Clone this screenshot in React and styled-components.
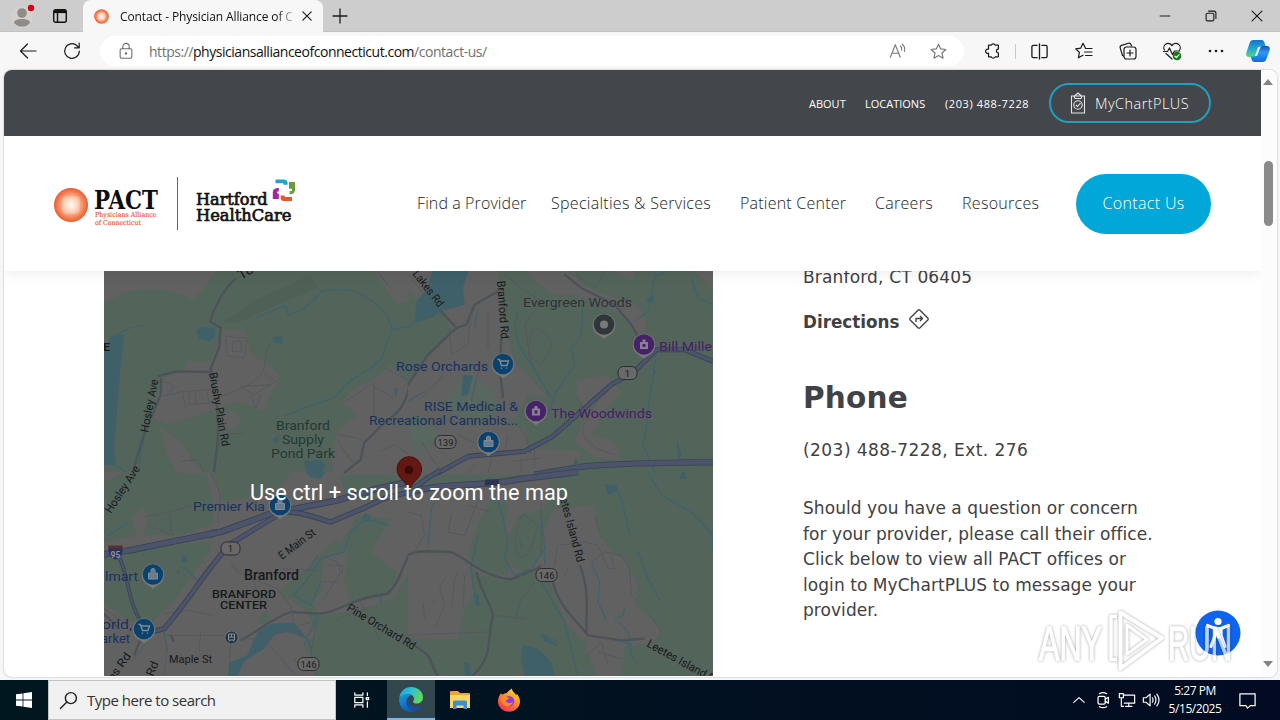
import React from 'react'
import styled, { createGlobalStyle } from 'styled-components'

const GlobalStyle = createGlobalStyle`
    *{
        box-sizing: border-box;
    }
    body{
        margin: 0;
        overflow: hidden;
        background: #f7f7f7;
    }
    svg{
        display: block;
        flex: none;
    }
`

// ---------- browser icons ----------

function Line({ size = 20, w = 1.2, color = '#1b1b1b', children }) {
    return (
        <svg width={size} height={size} viewBox="0 0 20 20" fill="none" stroke={color} strokeWidth={w} strokeLinecap="round" strokeLinejoin="round">
            {children}
        </svg>
    )
}

const STAR = 'M10 2.3l2.3 5 5.4.6-4 3.7 1.1 5.4-4.8-2.7L5.200 17l1.100-5.400-4-3.700 5.400-.6z'

function Sun({ size }) {
    return (
        <svg width={size} height={size} viewBox="0 0 36 36">
            <defs>
                <radialGradient id={'sun' + size}>
                    <stop offset="0" stopColor="#fffaf2" />
                    <stop offset=".35" stopColor="#fcd0b4" />
                    <stop offset=".72" stopColor="#f58a5e" />
                    <stop offset="1" stopColor="#ee5a30" />
                </radialGradient>
            </defs>
            <circle cx="18" cy="18" r="17.500" fill={'url(#sun' + size + ')'} />
            <rect x="9" y="9" width="18" height="18" rx="3" fill="#fff" opacity=".22" />
        </svg>
    )
}

function Copilot() {
    return (
        <svg width="26" height="26" viewBox="0 0 26 26">
            <defs>
                <linearGradient id="cpA" x1="0" y1="0" x2="0" y2="1">
                    <stop offset="0" stopColor="#1473d0" />
                    <stop offset=".5" stopColor="#20a8d0" />
                    <stop offset="1" stopColor="#58d38c" />
                </linearGradient>
                <linearGradient id="cpB" x1="0" y1="0" x2="0" y2="1">
                    <stop offset="0" stopColor="#1c4fbd" />
                    <stop offset=".4" stopColor="#2b9af3" />
                    <stop offset="1" stopColor="#1668dc" />
                </linearGradient>
            </defs>
            <path d="M8.500 2h8c2 0 2.600 1.500 3.200 3.500l.8 2.500h-3c-2 0-2.800 1-3.400 3l-1.600 5.500c-.5 1.500-1.500 2.500-3 2.500H4c-2.500 0-3.300-2-2.600-4.500L4.600 5C5.200 3 6.300 2 8.500 2z" fill="url(#cpA)" />
            <path d="M17.500 24h-8c-2 0-2.600-1.500-3.200-3.500L5.800 18.500h3.400c2 0 2.800-1 3.400-3l1.600-5c.5-1.500 1.500-2.500 3-2.500H22c2.500 0 3.300 2 2.600 4.500L21.400 21c-.6 2-1.700 3-3.900 3z" fill="url(#cpB)" />
            <path d="M15.800 8.600l-3.600 8.800-2.400.8 3.400-9.200z" fill="#fff" opacity=".9" />
        </svg>
    )
}

// ---------- tab strip ----------

function TabStrip() {
    return (
        <Strip>
            <Profile>
                <svg width="24" height="26" viewBox="0 0 24 26">
                    <circle cx="11" cy="14" r="11" fill="#d3d0ce" />
                    <circle cx="11" cy="10" r="4.800" fill="#8f8b89" />
                    <path d="M3 20c0-3 3.500-4 8-4s8 1 8 4c-2 2.500-5 3.600-8 3.600S5 22.500 3 20z" fill="#8f8b89" />
                    <circle cx="20" cy="5" r="3.200" fill="#d80010" />
                </svg>
            </Profile>
            <svg width="16" height="16" viewBox="0 0 16 16" fill="none" stroke="#111" strokeWidth="1.400">
                <rect x="1.700" y="1.700" width="12.600" height="12.600" rx="2" />
                <path d="M2 3.600h12" strokeWidth="3" />
                <path d="M5.500 4v10" />
            </svg>
            <Tab>
                <Sun size={15} />
                <TabTitle>Contact - Physician Alliance of C</TabTitle>
                <Line size={14} w={1.7}><path d="M4 4l12 12M16 4L4 16" /></Line>
            </Tab>
            <Line size={20} w={1.3}><path d="M10 3v14M3 10h14" /></Line>
            <WindowButtons>
                <Line size={14} w={1.4}><path d="M3 10h14" /></Line>
                <Line size={14} w={1.6}><rect x="3" y="6" width="11" height="11" rx="2" /><path d="M6.500 3H14a3 3 0 0 1 3 3v7.500" /></Line>
                <Line size={14} w={1.6}><path d="M3 3l14 14M17 3L3 17" /></Line>
            </WindowButtons>
        </Strip>
    )
}

function Toolbar() {
    return (
        <Tools>
            <Slot $w={48}><Line><path d="M18 10H2.500M9.500 3L2.500 10l7 7" /></Line></Slot>
            <Slot $w={40}><Line><path d="M17.300 10a7.300 7.300 0 1 1-2.300-5.300l2 1.900M17.200 2.200v4.600h-4.600" /></Line></Slot>
            <Address>
                <Line size={18} color="#6c6c6c"><rect x="3.500" y="7.500" width="13" height="10.500" rx="1.500" /><path d="M6.500 7.500V5a3.500 3.500 0 0 1 7 0v2.500" /><circle cx="10" cy="12.700" r=".7" fill="#555" /></Line>
                <Url>https://<b>physiciansallianceofconnecticut.com</b>/contact-us/</Url>
                <Slot $w={40}><Line size={18} color="#757575"><path d="M1.500 17L7 3l5.500 14M3.400 12.500h7.200M12.500 4.500c1.500 1 2 2.500 1.600 4.500M14.500 2.500c2.700 1.700 3.500 4.500 2.700 8" /></Line></Slot>
                <Slot $w={40}><Line size={19} color="#757575"><path d={STAR} /></Line></Slot>
            </Address>
            <Slot $w={44}>
                <Line size={18} w={1.4}><path d="M5 3.500h3.200a2.200 2.200 0 0 1 4.200 0H16v4.300a2 2 0 0 0 0 4.400v4.300h-3.600a2.200 2.200 0 0 1-4.200 0H5v-4a2.400 2.400 0 1 1 0-4.500z" /></Line>
            </Slot>
            <Divider />
            <Slot $w={46}><Line size={19} w={1.4}><path d="M10 2v16M7.500 3.500H3.500a1.500 1.500 0 0 0-1.500 1.500v10a1.500 1.500 0 0 0 1.500 1.500h4M12.500 3.500h4A1.500 1.500 0 0 1 18 5v10a1.500 1.500 0 0 1-1.500 1.500h-4" /></Line></Slot>
            <Slot $w={44}><Line><path d="M11.500 7.300L9 2.300 6.700 7.200l-5 .6 3.700 3.600-1 5.400L9 14.200M11.500 7.500H18M10.500 11H18M11.500 14.500H18" /></Line></Slot>
            <Slot $w={44}><Line><path d="M5.500 15L4.500 14.500 2.200 6.800A2 2 0 0 1 3.600 4.400L10.500 2.300A2 2 0 0 1 13 3.600L13.500 5" /><rect x="6" y="6" width="12" height="12" rx="2.500" /><path d="M12 9v6M9 12h6" /></Line></Slot>
            <Slot $w={44}>
                <Line>
                    <path d="M2.400 9A4.300 4.300 0 0 1 10 4.600 4.300 4.300 0 0 1 17.700 9M1.500 10.500H5.500L7.500 7l3 6.500 2-3.500h5M4 12.500l6 5.500" />
                    <circle cx="15" cy="15" r="4.300" fill="#107c10" stroke="none" />
                    <path d="M13 15.200l1.400 1.300L17 13.800" stroke="#fff" />
                </Line>
            </Slot>
            <Slot $w={44}><Line color="none"><g fill="#1b1b1b"><circle cx="4" cy="10" r="1.300" /><circle cx="10" cy="10" r="1.300" /><circle cx="16" cy="10" r="1.300" /></g></Line></Slot>
            <Slot $w={40}><Copilot /></Slot>
        </Tools>
    )
}

// ---------- site header ----------

function Logos() {
    return (
        <svg width="246" height="60" viewBox="50 174 246 60">
            <svg x="53.500" y="187.500" width="35" height="35"><Sun size={35} /></svg>
            <g fontFamily="'DejaVu Serif', serif">
                <text x="94" y="209" fontSize="25.500" fontWeight="700" fill="#0d0d0d" textLength="64" lengthAdjust="spacingAndGlyphs">PACT</text>
                <g fontSize="6.800" fill="#e8562a" stroke="#e8562a" strokeWidth=".15">
                    <text x="95" y="217" textLength="61.500" lengthAdjust="spacingAndGlyphs">Physicians Alliance</text>
                    <text x="95" y="225" textLength="46" lengthAdjust="spacingAndGlyphs">of Connecticut</text>
                </g>
                <g fontSize="16.500" fill="#111" stroke="#111" strokeWidth=".7">
                    <text x="196" y="204.500" textLength="71.500" lengthAdjust="spacingAndGlyphs">Hartford</text>
                    <text x="196" y="220.500" textLength="95.500" lengthAdjust="spacingAndGlyphs">HealthCare</text>
                </g>
            </g>
            <path d="M177.500 177v53" stroke="#666" />
            <path d="M275.500 179.500h8.500c2.800 0 4 2 3.600 5.200h-4.200v-1.500h-7.900z" fill="#1aa6cf" />
            <path d="M289 182h6v8c0 2.800-2 4.200-5.400 4.200v-3.200h2.400v-2.300h-3z" fill="#6a9b3c" />
            <path d="M272.800 199v-6.500c0-2.800 2-4.500 6-4.500v3.400h-1.600v2h1.600v5.600z" fill="#a7269b" />
            <path d="M292 201h-8c-2.800 0-3.700-2-3.300-5.500h4v1.600h7.300z" fill="#e9562b" />
        </svg>
    )
}

const links = [
    { name: 'Find a Provider', w: 134, ls: 0.1 },
    { name: 'Specialties & Services', w: 189, ls: 0.28 },
    { name: 'Patient Center', w: 135, ls: 0.22 },
    { name: 'Careers', w: 87, ls: 0.3 },
    { name: 'Resources', w: 114, ls: 0.3 },
]

function SiteHeader() {
    return (
        <Header>
            <TopBar>
                <TopLink $w={56}>ABOUT</TopLink>
                <TopLink $w={80}>LOCATIONS</TopLink>
                <TopLink $w={104} $ls={0.6}>(203) 488-7228</TopLink>
                <ChartButton>
                    <svg width="16" height="22" viewBox="0 0 16 22" fill="none" stroke="#e4e6e8" strokeWidth="1.100">
                        <path d="M1.500 4h13v17h-13zM4 4.500L8 1l4 3.500-1 2H5z" />
                        <circle cx="8" cy="13" r="4.200" />
                        <path d="M6 13l1.500 1.500L10.500 11" />
                    </svg>
                    MyChartPLUS
                </ChartButton>
            </TopBar>
            <Nav>
                <Logos />
                <NavLinks>
                    {links.map((link) => (
                        <NavLink key={link.name} $w={link.w} $ls={link.ls}>{link.name}</NavLink>
                    ))}
                    <ContactButton>Contact Us</ContactButton>
                </NavLinks>
            </Nav>
        </Header>
    )
}

// ---------- map ----------

const LAND = '#626161'
const GREEN = '#53645b'
const WATER = '#3f6069'

// the map is cut into four tiles, each one drawn at three times its size
function Tile({ x, y, children }) {
    return <g transform={`translate(${x} ${y}) scale(.33333)`}>{children}</g>
}

function Land({ d }) {
    return <path d={d} fill={LAND} />
}
function Water({ d }) {
    return <path d={d} fill={WATER} />
}
function Stream({ d }) {
    return <path d={d} fill="none" stroke="#40626a" strokeWidth="4" />
}
function Street({ d }) {
    return <path d={d} fill="none" stroke="#55585c" strokeWidth="3" />
}
function Road({ d }) {
    return <path d={d} fill="none" stroke="#4c5358" strokeWidth="7" strokeLinejoin="round" />
}
function Highway({ d, w = 15 }) {
    return (
        <g fill="none" strokeLinejoin="round">
            <path d={d} stroke="#3a4252" strokeWidth={w} />
            <path d={d} stroke="#4b546a" strokeWidth={w - 5} />
        </g>
    )
}

function Pin({ x, y, color, icon }) {
    return (
        <g transform={`translate(${x} ${y})`}>
            <path d="M0 14.500c-1.500-2.500-5-3-8-6A11.300 11.300 0 1 1 8 8.500C5 11.500 1.500 12 0 14.500z" fill="#777a78" />
            <circle r="10.300" fill={color} />
            {icon === 'cart' && <path d="M-5.500-4.500h2l2 6h5.500l1.500-4.500h-8M-1.500 3.500v1.300M3.500 3.500v1.300" stroke="#7f8b95" strokeWidth="1.400" fill="none" />}
            {icon === 'bag' && <path d="M-4.500-1.500h9v6h-9zM-2-2v-2a2 2 0 0 1 4 0v2" stroke="#7f8b95" fill="#7f8b95" fillOpacity=".8" />}
            {icon === 'house' && <path d="M-4-2.500h2.500v-2.500h3v2.500H4v7h-8zM-1.500-.5v3h3v-3z" fill="#8b7f97" fillRule="evenodd" />}
            {icon === 'dot' && <circle r="4" fill="#777a7b" />}
        </g>
    )
}

function Badge({ x, y, w = 19, n }) {
    return (
        <g transform={`translate(${x} ${y})`}>
            <rect x={-w / 2} y="-6.500" width={w} height="13" rx="5.500" fill="#696969" stroke="#272727" strokeWidth=".9" />
            <text y="3.500" fontSize="9.500" textAnchor="middle" fill="#1c1c1c">{n}</text>
        </g>
    )
}

function Place({ x, y, len, rot = 0, size = 13.5, color = '#15191b', weight = 400, children }) {
    return (
        <text transform={`translate(${x} ${y}) rotate(${rot})`} fontSize={size} fontWeight={weight} fill={color} textLength={len} lengthAdjust="spacingAndGlyphs" stroke="#61656340" strokeWidth="2" paintOrder="stroke">
            {children}
        </text>
    )
}

const BLUE = '#17315f'
const PURPLE = '#432064'

function BranfordMap() {
    return (
        <svg width="609" height="405" viewBox="104 271 609 405" fontFamily="Roboto, sans-serif">
            <rect x="104" y="271" width="609" height="405" fill={GREEN} />
            <Tile x={104} y={268}>
                <Land d="M0 0H345L300 60 265 95C200 55 120 60 60 75L0 105z" />
                <Land d="M795 0H915V95L880 110 850 70 830 35z" />
                <Land d="M175 330L240 310 245 285 322 280 352 185 425 188 440 262 490 285 530 325 500 380 480 430 400 400 330 425 240 455 190 470 150 450 160 380z" />
                <Land d="M350 440L390 425 415 455 375 490 350 470zM165 475L240 530 270 590 310 620H225L190 560z" />
                <Land d="M860 290L920 350V620H690L680 560 700 490 760 440 715 405 740 370 830 320z" />
                <path d="M360 160L470 90 620 20 640 60 520 110 400 165z" fill="#4f6057" />
                <Water d="M20 205L60 200 50 290 40 420 30 540 35 590H0V250z" />
                <Water d="M275 190L290 178 335 180 332 207 315 220 285 210zM505 210L530 200 537 226 510 225zM870 360L882 365 875 390zM505 515L525 502 520 530zM600 580L650 575 665 590 650 620H610z" />
                <Stream d="M455 150L545 112 552 140C600 130 630 100 650 70 690 60 740 65 760 75 820 100 850 130 865 185L915 175" />
                <Stream d="M865 185C850 220 840 240 835 270L800 300 730 345 690 390 600 420 540 445M35 203L80 178 120 172M30 590L70 615M120 500L105 590" />
                <Road d="M395 32C360 60 330 120 318 160L350 180 345 240 320 300C340 400 350 480 335 570L330 615" />
                <Road d="M160 325L215 310 320 312M172 330L170 380 120 500 85 615" />
                <Road d="M915 360C900 430 860 450 830 475L780 525 770 575 720 615" />
                <Street d="M175 385L230 372 320 365M335 390C400 370 470 340 480 300L490 240 505 220M365 205L430 210 420 270 370 265zM385 220H412V250H385zM410 355L500 350M410 355L450 380 515 340 480 315M440 385L455 420 470 380M235 375L245 420M255 375V410L315 405 310 370M275 375V405M185 340L210 355 190 380M230 580L280 575 300 615M350 500L420 495M810 345V445M725 400L800 350 870 390M705 500L760 510 780 525M830 550L870 530 915 560M845 300L915 340M750 590L700 520M820 10L850 50" />
            </Tile>
            <Tile x={408} y={268}>
                <Land d="M0 0H270L290 170 320 280 420 390 360 380 330 440 290 470 350 480 360 540 520 550 500 620H0V340L130 190 90 110 20 90 0 60z" />
                <Land d="M350 0H490L520 50 590 80 690 110 715 170 700 220 660 150 580 110 500 80 440 80 380 40z" />
                <Land d="M505 340L590 320 640 370 590 430 550 500 620 520 640 575 560 570 500 520 540 430 510 390zM600 0H690L670 40zM850 0H915V60z" />
                <path d="M170 320L240 350 280 420 230 470 160 450 110 400zM0 450L50 440 100 510 20 560z" fill="#586760" />
                <Water d="M75 0H185L165 60 170 110 100 130 70 150 20 165 25 100 60 60zM165 320L195 325 180 380 160 385zM805 510L820 560 812 580zM495 600L503 570 515 595z" />
                <Water d="M715 95L730 80 740 90 730 105zM735 300L745 310 735 330z" />
                <Stream d="M740 20L730 90 720 130 680 160M745 250L735 330C720 400 720 450 715 480L705 530 740 615M520 110C530 180 520 210 490 240L500 290 440 380 420 440M740 25L800 0M330 130C310 180 330 240 370 290L430 390M850 30L870 90 915 110M0 180L60 130M210 120L200 180M0 400L50 370" />
                <Road d="M100 130L145 180 175 170 200 110 270 70M145 180L60 260 0 350M280 210L275 300 285 390M470 20L520 60 620 110 670 170 705 230" />
                <Street d="M290 20L340 60 400 100 350 170 370 290M125 180L130 260 180 230 190 120M0 20L60 90M370 190C390 170 430 200 430 240L400 290 360 260zM240 130V240M210 310L190 400M30 400L100 330 110 290M330 470L350 500 370 560M100 550L140 590M40 520L90 600M150 500L210 530M200 590L180 615M250 575L240 615M300 500L290 560M310 580L400 570M340 610V570M380 600V530M510 390L540 450M500 20L560 60 590 10M620 110L660 90M600 370C560 400 550 430 540 450 500 500 540 540 620 560M860 240L915 230" />
                <Highway d="M90 615L180 565 350 550 430 508C500 450 540 410 610 350L680 310 745 245 830 245 915 280" w={15} />
                <Highway d="M380 620L530 595C700 582 820 584 915 583" w={19} />
                <path d="M495 590L503 567 515 590z" fill="#485e58" />
            </Tile>
            <Tile x={104} y={472}>
                <Land d="M0 0H80L90 50 130 130 120 190 230 190 330 155 300 0H330L350 90 520 60 560 0H700L730 80 820 90 915 40V300L870 380 740 420 650 430 620 390 650 360 660 260 720 230 690 200 610 290 520 360 600 410 640 480 720 510 770 550 830 620H0V395L130 480 180 390 190 300 250 240 200 220 0 250z" />
                <path d="M0 260L60 270 180 225 330 205 310 250 200 400 130 460 60 400 0 390zM0 30L60 0H130L140 80 80 140 100 190 0 215zM190 0L310 10 330 130 250 110zM760 130L860 140 830 190 800 240 890 310 860 370 740 390 720 330 730 220 690 250zM460 440L490 415 500 450 470 455z" fill={GREEN} />
                <path d="M640 480L750 500 830 490 915 560V620H640L600 520z" fill={GREEN} />
                <Water d="M370 615L380 570 430 550 460 480 500 455 570 452 610 500 580 490 550 480 510 490 480 530 420 570 400 615zM605 0H665L650 20 620 15z" />
                <Water d="M235 245L250 255 245 275 232 268zM218 295L228 300 222 308zM780 125L800 130 795 150 775 145z" />
                <path d="M330 170L300 180 320 200 370 175z" fill="#484e63" />
                <Stream d="M0 120L40 80M10 190L70 155M240 285L280 325M790 135L740 180 720 240 650 260 620 310 570 370 620 400 650 330M780 140L860 160M610 490L640 620M830 370V395M620 480L640 430 600 520M180 480L190 540M860 20L840 90M640 250L610 300" />
                <Road d="M915 250C890 290 890 330 850 365L810 372C740 385 700 420 650 425L560 420C500 440 460 480 410 505" />
                <Street d="M120 135L200 120 260 100M130 160L210 190M200 130V180M320 0L350 70 340 155M380 270L400 300 520 350 560 400 570 460 600 500M180 425L250 415 330 430M190 490L380 490M410 500L480 500 540 570 580 615M480 500L620 450M380 510L375 615M190 520L180 615M650 250L700 270 710 300 660 380M670 280H715V310M660 330H700M530 290L640 295M440 310L480 410M80 570L130 510M600 600L570 560M290 480L285 540M700 440L790 410M640 440L620 540M770 390L830 510M0 410L60 450" />
                <Road d="M200 490L210 510M0 425L40 465M110 500L90 550" />
                <Highway d="M0 248C30 240 70 238 100 230L350 180 500 125 700 85 820 50 920 28" w={20} />
                <Highway d="M550 120C600 120 640 140 680 150L780 108 840 80 915 60 975 15 1010 -5" w={16} />
                <Highway d="M520 130L380 215C300 300 260 380 180 470L150 478" w={16} />
                <Highway d="M45 255C75 310 70 400 120 460" w={11} />
            </Tile>
            <Tile x={408} y={472}>
                <Land d="M0 60L420 10 430 50 410 110 330 130 300 200 310 280 350 300 400 250 410 170 440 110 560 100 570 180 610 240 650 260 690 340 680 400 760 470 740 510 630 530 560 600 530 510 470 450 430 340 380 290 290 320 220 310 170 270 120 240 0 235z" />
                <Land d="M0 240L130 245 180 280 200 360 170 410 150 500 0 500zM550 520L650 530 640 615H560z" />
                <path d="M250 80L300 95 290 170 310 250 300 310 220 300 180 250 210 160z" fill={GREEN} />
                <Water d="M345 520L390 530 430 570 440 615H350L340 560zM590 35L625 40 630 55 600 70zM820 0H830L835 20 815 20zM195 360L212 370 215 400 205 405zM170 570L185 575 190 615H170zM400 485L450 520 410 510z" />
                <Stream d="M630 55L650 120 665 185M720 0L760 70 850 120 915 190 915 240M690 240L720 320 755 385M550 270L575 330 570 390 595 445M620 440L645 430 650 410M210 190L190 280 195 340 210 400M60 220L70 110 80 90M270 80L300 200 290 260 320 310 370 290 410 230 400 130M400 330L440 400 470 450 510 615M620 500L670 520 660 480 630 450M410 240V280M655 500L680 570M400 485L450 510" />
                <Road d="M0 250C20 230 100 240 130 240 180 260 210 310 310 322L390 288 400 280M205 300C220 370 270 420 250 450 240 520 250 560 190 615M435 330C450 400 500 440 540 490L640 505 710 500M515 280C545 350 535 420 535 485M0 505L60 550 90 615" />
                <Street d="M0 120L40 130 50 190 20 235M130 130L120 180 170 190 200 110 230 50M180 100L250 120M340 130C330 170 310 210 330 250 350 270 370 240 390 160L350 130zM335 200L340 230M400 90L400 250M110 320L95 350 110 400 80 470M150 300C130 330 140 380 130 410M170 310L165 410M45 390L50 440M80 380L75 400M0 490L100 485 240 480M260 430L350 440M550 270L590 240 640 250 665 290 670 370 720 420 760 480M600 290L570 220 530 210 450 220 440 280M600 290H620L610 250M470 310L480 290M560 130L580 200M540 550L580 510 600 580M570 540L640 560M320 450L340 380 380 330M430 50L470 80 440 120" />
                <Highway d="M0 65C80 30 240 45 330 22L510 0" w={20} />
            </Tile>
            <path d="M108.500 546.500h14c2 7-1 12-7 13.500-6-1.500-9-6.500-7-13.500z" fill="#26345c" stroke="#5a6072" strokeWidth=".8" />
            <path d="M108.500 545.500h14l.5 3h-15z" fill="#59302f" />
            <text x="115.500" y="557.500" fontSize="8.500" fontWeight="700" textAnchor="middle" fill="#8e93a0">95</text>
            <path d="M485.500 479.500h13l1 6h-15z" fill="#2d3352" />
            <Badge x={627.500} y={373} n="1" />
            <Badge x={230.500} y={548.500} n="1" />
            <Badge x={445.500} y={442} w={21} n="139" />
            <Badge x={546.500} y={575} w={21} n="146" />
            <Badge x={308.500} y={664} w={21} n="146" />

            <Place x={241} y={280} rot={-30} len={16}>To</Place>
            <Place x={103} y={351} size={11} len={7} weight={700}>E</Place>
            <Place x={148} y={433} rot={-79} size={11.5} len={54}>Hosley Ave</Place>
            <Place x={209} y={373} rot={80} size={11.5} len={75}>Brushy Plain Rd</Place>
            <Place x={412} y={274} rot={52} size={11.5} len={43}>Lakes Rd</Place>
            <Place x={497} y={281} rot={86} size={11.5} len={58}>Branford Rd</Place>
            <Place x={111} y={514} rot={-57} size={11.5} len={54}>Hosley Ave</Place>
            <Place x={282} y={560} rot={-37} size={11.5} len={43}>E Main St</Place>
            <Place x={346} y={610} rot={31} size={11.5} len={78}>Pine Orchard Rd</Place>
            <Place x={560} y={499} rot={75} size={11.5} len={66}>etes Island Rd</Place>
            <Place x={646} y={646} rot={29} size={11.5} len={76}>Leetes Island R</Place>
            <Place x={169} y={663} size={11.5} len={43}>Maple St</Place>
            <Place x={113} y={682} rot={-55} size={11.5} len={32}>ps Rd</Place>
            <Place x={153} y={677} rot={-68} size={11.5} len={15}>Rd</Place>

            <Place x={244} y={580} size={14.500} weight={500} len={55}>Branford</Place>
            <Place x={212} y={598} size={11} weight={500} len={64}>BRANFORD</Place>
            <Place x={220} y={609} size={11} weight={500} len={47}>CENTER</Place>
            <Place x={276} y={430} color="#203b31" len={54}>Branford</Place>
            <Place x={282} y={444} color="#203b31" len={42}>Supply</Place>
            <Place x={271} y={458} color="#203b31" len={64}>Pond Park</Place>
            <Place x={523} y={307} color="#2b3335" len={109}>Evergreen Woods</Place>
            <Place x={396} y={371} color={BLUE} len={92}>Rose Orchards</Place>
            <Place x={424} y={411} color={BLUE} len={94}>RISE Medical &amp;</Place>
            <Place x={369} y={425} color={BLUE} len={149}>Recreational Cannabis...</Place>
            <Place x={193} y={511} color={BLUE} len={72}>Premier Kia</Place>
            <Place x={105} y={581} color={BLUE} len={33}>lmart</Place>
            <Place x={102} y={629} color={BLUE} len={30}>orld,</Place>
            <Place x={101} y={643} color={BLUE} len={29}>arket</Place>
            <Place x={659} y={351} color={PURPLE} len={53}>Bill Mille</Place>
            <Place x={551} y={418} color={PURPLE} len={101}>The Woodwinds</Place>

            <Pin x={604} y={324.500} color="#30363a" icon="dot" />
            <Pin x={644} y={344.500} color="#462267" icon="house" />
            <Pin x={536} y={411} color="#462267" icon="house" />
            <Pin x={503} y={364} color="#0a426f" icon="cart" />
            <Pin x={488.500} y={442} color="#0a426f" icon="bag" />
            <Pin x={280} y={505} color="#0a426f" icon="bag" />
            <Pin x={153} y={574.500} color="#0a426f" icon="bag" />
            <Pin x={144} y={629} color="#0a426f" icon="cart" />
            <g transform="translate(231.500 637.500)">
                <circle r="6.500" fill="#263340" stroke="#687078" />
                <path d="M-3-3.500h6v6h-6zM-2.500 4l1-1.500M2.500 4l-1-1.500M-3-.5h6M0-3.500v3" stroke="#8a9196" fill="none" />
            </g>
            <path d="M409 491c-1-9-12-12-12-22a12.300 12.300 0 0 1 24.600 0c0 10-11 13-12.600 22z" fill="#641813" stroke="#48100d" />
            <circle cx="409" cy="470" r="4.300" fill="#380b09" />
            <text x="250" y="500" fontSize="22" fill="#fff" textLength="318" lengthAdjust="spacingAndGlyphs">Use ctrl + scroll to zoom the map</text>
        </svg>
    )
}

// ---------- overlays ----------

function Watermark() {
    return (
        <svg width="204" height="70" viewBox="1034 606 204 70">
            <g fontFamily="'Liberation Sans', sans-serif" fontSize="48" fill="#fff" stroke="#fff" strokeWidth="1.300">
                <text x="1039" y="660" textLength="63" lengthAdjust="spacingAndGlyphs">ANY</text>
                <text x="1168" y="660" textLength="64" lengthAdjust="spacingAndGlyphs">RUN</text>
            </g>
            <g fill="none" stroke="#fff" strokeLinejoin="round">
                <path d="M1117 616.500h-6V659.500h6" strokeWidth="3.500" />
                <path d="M1120.500 612.500V668.500L1162 638z" strokeWidth="4" />
                <path d="M1127 625v29l20-14.500z" strokeWidth="3" />
            </g>
        </svg>
    )
}

function Accessibility() {
    return (
        <svg width="46" height="46" viewBox="0 0 46 46">
            <circle cx="23" cy="23" r="22.500" fill="#0f63ee" />
            <circle cx="23" cy="11.500" r="3.600" fill="#fff" />
            <path d="M12.500 15.500l7.500 3v7l-4 11M33.500 15.500l-7.500 3v7l4 11M20 18.500h6M23 19v8" stroke="#fff" strokeWidth="3.200" fill="none" strokeLinecap="round" strokeLinejoin="round" />
        </svg>
    )
}

// ---------- taskbar ----------

function EdgeIcon() {
    return (
        <svg width="26" height="26" viewBox="0 0 26 26">
            <defs>
                <linearGradient id="eA" x1="0" y1="0" x2="1" y2=".3">
                    <stop offset="0" stopColor="#1f9de0" />
                    <stop offset=".55" stopColor="#2fc3cf" />
                    <stop offset="1" stopColor="#62d75a" />
                </linearGradient>
                <linearGradient id="eB" x1="0" y1="0" x2=".6" y2="1">
                    <stop offset="0" stopColor="#1b9be0" />
                    <stop offset="1" stopColor="#0f57b4" />
                </linearGradient>
            </defs>
            <path d="M1.200 12C2 5.500 7 1 13.200 1 20.500 1 25 6.200 25 11.500c0 3.600-2.600 6-6 6-2.500 0-4-.8-4-1.800 0-.6 1-1 1-3 0-2.500-2.300-4.500-5.500-4.500C6.500 8.200 3 10 1.200 12z" fill="url(#eA)" />
            <path d="M1 13.500c.8-3 4.800-5.300 9.500-5.300 1.500 0 2.600.4 3.500 1-3.500.5-5.500 3.300-5.500 6.300 0 4.500 4 9 9.500 9.300-1.500.7-3 1.200-5 1.200C6 26 1 20.500 1 13.500z" fill="url(#eB)" />
            <path d="M10.500 12.500c-1 5 3.500 8.500 8 8.500 2 0 3.500-.5 4.800-1.100.5-.2.900.2.600.7-1.500 2.400-4 4.200-6.500 4.400-5.500 0-9-4.800-8.900-8.500 0-1.600.7-3 2-4z" fill="#1a4f9c" />
        </svg>
    )
}

function FolderIcon() {
    return (
        <svg width="22" height="20" viewBox="0 0 22 20">
            <path d="M1 2a1 1 0 0 1 1-1h7l2 2h9a1 1 0 0 1 1 1v14H1z" fill="#e8a92c" />
            <path d="M1 5h20v13H1z" fill="#fbd664" />
            <path d="M4 19v-7a1.500 1.500 0 0 1 1.500-1.500h11A1.500 1.500 0 0 1 18 12v7h-3.500v-3.500h-7V19z" fill="#3c8fc9" />
        </svg>
    )
}

function FirefoxIcon() {
    return (
        <svg width="24" height="24" viewBox="0 0 24 24">
            <defs>
                <linearGradient id="ff" x1=".8" y1="0" x2=".2" y2="1">
                    <stop offset="0" stopColor="#ffe03a" />
                    <stop offset=".45" stopColor="#ff8b22" />
                    <stop offset="1" stopColor="#f52a5c" />
                </linearGradient>
            </defs>
            <path d="M4 5c.5 1 1 1.500 1.800 1.600C7 5.400 8.500 5 9.500 5.200 11 3.500 12.500 2 15 .5c0 2 1 3 2.500 4.500 1 .8 1.300 1.500 1.500 2.200.6-.3.7-1 .7-1.800 2 2.500 3.300 5.400 3.300 8.100C23 19.300 18 23.700 12 23.700S1 19.300 1 13.200C1 10 2.300 7.500 4 5z" fill="url(#ff)" />
            <circle cx="12" cy="13.200" r="5.300" fill="#8a3be2" />
            <path d="M4.500 9c3-1.500 5-.3 7.800 1.200-.5 1.300-3 1.300-3.500 2.600 1 3 5 3 7.200 1-1 3.800-4.500 5.200-7.500 4.200S4 13.500 4.500 9z" fill="#ff8b22" />
        </svg>
    )
}

function Taskbar() {
    return (
        <Bar>
            <TaskSlot $w={48}>
                <svg width="16" height="16" viewBox="0 0 16 16" fill="#fff"><path d="M0 2.300l6.600-.9v6.200H0zM7.400 1.300L16 0v7.600H7.400zM0 8.400h6.600v6.200L0 13.700zM7.400 8.400H16V16l-8.600-1.200z" /></svg>
            </TaskSlot>
            <Search>
                <Line size={19} w={1.5} color="#222"><circle cx="12.500" cy="7.500" r="5.800" /><path d="M8.300 11.700L1.500 18.500" /></Line>
                Type here to search
            </Search>
            <TaskSlot $w={51}>
                <Line size={18} w={1.4} color="#fff"><path d="M2 2v2.500h9V2M2 18v-2.500h9V18M2 7h9v6H2zM16 2v3M16 12v6M14.700 7.500h2.600v2h-2.600z" /></Line>
            </TaskSlot>
            <TaskSlot $w={48} $active><EdgeIcon /></TaskSlot>
            <TaskSlot $w={50}><FolderIcon /></TaskSlot>
            <TaskSlot $w={48}><FirefoxIcon /></TaskSlot>
            <Tray>
                <TaskSlot $w={24}><Line size={14} w={1.6} color="#fff"><path d="M2.500 13.500l7.500-7 7.500 7" /></Line></TaskSlot>
                <TaskSlot $w={24}><Line size={18} w={1.4} color="#fff"><rect x="4.500" y="6" width="8" height="8.500" rx="1.500" /><path d="M12.500 9l3.500-2v6.500l-3.500-2M6 3c2.500-1.500 5.500-1.500 8 0M6 17.500c2.500 1.300 5.500 1.300 8 0" /></Line></TaskSlot>
                <TaskSlot $w={24}><Line size={18} w={1.3} color="#fff"><path d="M7 4.500h11.500v9H7M12 13.500V17M8.500 17H15.500M1.500 3H6v4.500H1.500zM3.700 7.500v9.500h2.500" /></Line></TaskSlot>
                <TaskSlot $w={24}><Line size={18} w={1.3} color="#fff"><path d="M1.500 7.500h3L9 3.500v13l-4.500-4h-3zM11.500 7.500c1 1.500 1 3.500 0 5M14 5.500c2 2.500 2 6.500 0 9M16.500 3.500c3 4 3 9 0 13" /></Line></TaskSlot>
                <Clock>
                    <span>5:27 PM</span>
                    <span>5/15/2025</span>
                </Clock>
                <TaskSlot $w={40}><Line size={19} w={1.3} color="#fff"><path d="M2 3h16v12.500h-5L10 18l-1.500-2.500H2z" /></Line></TaskSlot>
            </Tray>
        </Bar>
    )
}

function App() {
    return (
        <Screen>
            <GlobalStyle />
            <TabStrip />
            <Toolbar />
            <Viewport>
                <Page>
                    <SiteHeader />
                    <Content>
                        <BranfordMap />
                        <Details>
                            <Text $first $ls={0.17}>Branford, CT 06405</Text>
                            <Directions>
                                Directions
                                <svg width="20" height="20" viewBox="0 0 20 20" fill="none" stroke="#444" strokeWidth="1.400" strokeLinejoin="round">
                                    <path d="M9 1.200q1-.8 2 0L18.800 9q.8 1 0 2L11 18.800q-1 .8-2 0L1.200 11q-.8-1 0-2zM7 13V9.500h6M11 7l2.500 2.500L11 12" />
                                </svg>
                            </Directions>
                            <Heading>Phone</Heading>
                            <Text $ls={0.45}>(203) 488-7228, Ext. 276</Text>
                            <Note>
                                Should you have a question or concern<br />
                                for your provider, please call their office.<br />
                                Click below to view all PACT offices or<br />
                                login to MyChartPLUS to message your<br />
                                provider.
                            </Note>
                        </Details>
                    </Content>
                </Page>
                <ScrollBar>
                    <Arrow />
                    <Thumb />
                    <Arrow $down />
                </ScrollBar>
                <AccessButton><Accessibility /></AccessButton>
                <Mark><Watermark /></Mark>
            </Viewport>
            <Taskbar />
        </Screen>
    )
}

const Screen = styled.div`
    width: 1280px;
    height: 720px;
    display: flex;
    flex-direction: column;
    overflow: hidden;
    background: #f7f7f7;
    font-family: "Open Sans", "Noto Sans", sans-serif;
    white-space: nowrap;
`
const Strip = styled.div`
    height: 32px;
    display: flex;
    align-items: center;
    background: #cdcdcd;
    border-bottom: 1px solid #c2c2c2;
`
const Profile = styled.div`
    width: 41px;
    margin-right: 11px;
    padding-left: 11px;
`
const Tab = styled.div`
    width: 240px;
    height: 32px;
    margin: 0 7px 0 15px;
    padding: 0 9px 0 11px;
    display: flex;
    align-items: center;
    align-self: flex-start;
    background: #f7f7f7;
    border-radius: 8px 8px 0 0;
`
const TabTitle = styled.div`
    flex: 1;
    margin-left: 11px;
    margin-right: 6px;
    overflow: hidden;
    font-size: 12px;
    letter-spacing: -0.12px;
    color: #111;
    mask-image: linear-gradient(90deg, #000 90%, transparent 102%);
`
const WindowButtons = styled.div`
    margin-left: auto;
    margin-right: 16px;
    display: flex;
    gap: 32px;
`
const Tools = styled.div`
    height: 38px;
    display: flex;
    align-items: center;
    padding-left: 4px;
`
const Slot = styled.div`
    width: ${(p) => p.$w}px;
    display: flex;
    flex: none;
    align-items: center;
    justify-content: center;
`
const Address = styled.div`
    width: 864px;
    height: 30px;
    margin: 0 7px 0 8px;
    padding: 0 6px 0 17px;
    display: flex;
    align-items: center;
    background: #fff;
    border-radius: 15px;
`
const Url = styled.div`
    flex: 1;
    margin-left: 14px;
    font-size: 14px;
    letter-spacing: -0.47px;
    color: #707070;
    b{
        font-weight: 400;
        color: #111;
    }
`
const Divider = styled.div`
    width: 1px;
    height: 15px;
    background: #c9c9c9;
`
const Viewport = styled.div`
    position: relative;
    width: 1273px;
    height: 607px;
    margin-left: 4px;
    display: flex;
    overflow: hidden;
    background: #fff;
    border-radius: 8px;
    box-shadow: 0 0 2px rgba(0,0,0,.35);
`
const Page = styled.div`
    width: 1257px;
    overflow: hidden;
`
const Header = styled.div`
    position: relative;
    z-index: 1;
    background: #fff;
    box-shadow: 0 2px 14px rgba(0,0,0,.08);
`
const TopBar = styled.div`
    height: 66px;
    padding-right: 50px;
    display: flex;
    align-items: center;
    justify-content: flex-end;
    background: #43464b;
`
const TopLink = styled.div`
    width: ${(p) => p.$w}px;
    font-size: 11px;
    letter-spacing: ${(p) => p.$ls || 0}px;
    color: #fff;
`
const ChartButton = styled.div`
    width: 162px;
    height: 40px;
    padding-left: 19px;
    display: flex;
    align-items: center;
    gap: 9px;
    border: 2px solid #1e9fc0;
    border-radius: 20px;
    font-size: 14.5px;
    font-weight: 300;
    letter-spacing: .45px;
    color: #fff;
`
const Nav = styled.div`
    height: 135px;
    padding: 0 50px 0 46px;
    display: flex;
    align-items: center;
    justify-content: space-between;
`
const NavLinks = styled.div`
    display: flex;
    align-items: center;
`
const NavLink = styled.div`
    width: ${(p) => p.$w}px;
    padding-bottom: 2px;
    font-size: 16px;
    font-weight: 300;
    letter-spacing: ${(p) => p.$ls}px;
    color: #222;
`
const ContactButton = styled.div`
    width: 135px;
    height: 60px;
    line-height: 58px;
    border-radius: 30px;
    background: #00a7d8;
    text-align: center;
    font-size: 16px;
    font-weight: 300;
    letter-spacing: .35px;
    color: #fff;
`
const Content = styled.div`
    height: 405px;
    padding-left: 100px;
    display: flex;
`
const Details = styled.div`
    padding-left: 90px;
    font-family: "DejaVu Sans", Verdana, sans-serif;
    font-size: 17px;
    line-height: 25.5px;
    color: #414042;
`
const Text = styled.p`
    margin: ${(p) => (p.$first ? '-6px' : '0')} 0 0;
    letter-spacing: ${(p) => p.$ls}px;
`
const Directions = styled.div`
    margin-top: 18px;
    display: flex;
    gap: 9px;
    font-weight: 700;
    font-size: 16.8px;
    line-height: 26px;
`
const Heading = styled.h2`
    margin: 43px 0 20px;
    font-size: 29.5px;
    line-height: 40px;
    letter-spacing: .2px;
    color: #414248;
`
const Note = styled.p`
    margin: 33px 0 0;
    letter-spacing: .06px;
`
const ScrollBar = styled.div`
    width: 16px;
    padding: 9px 2px 10px 0;
    display: flex;
    flex-direction: column;
    align-items: center;
    background: #fcfcfc;
`
const Arrow = styled.div`
    margin-top: ${(p) => (p.$down ? 'auto' : '0')};
    border: 5px solid transparent;
    border-top-width: ${(p) => (p.$down ? '6px' : '0')};
    border-bottom-width: ${(p) => (p.$down ? '0' : '6px')};
    border-${(p) => (p.$down ? 'top' : 'bottom')}-color: #838383;
`
const Thumb = styled.div`
    width: 9px;
    height: 65px;
    margin-top: 76px;
    border-radius: 5px;
    background: #8a8a8a;
`
const AccessButton = styled.div`
    position: absolute;
    left: 1191px;
    top: 540px;
`
const Mark = styled.div`
    position: absolute;
    left: 1030px;
    top: 536px;
    opacity: .7;
    filter: drop-shadow(0 0 1.5px rgba(0,0,0,.5));
`
const Bar = styled.div`
    height: 40px;
    margin-top: 3px;
    display: flex;
    background: linear-gradient(90deg, #01171f, #020b22);
    color: #fff;
`
const TaskSlot = styled.div`
    width: ${(p) => p.$w}px;
    height: 40px;
    display: flex;
    align-items: center;
    justify-content: center;
    background: ${(p) => (p.$active ? '#33474f' : 'none')};
    border-bottom: ${(p) => (p.$active ? '2px solid #76b9ed' : 'none')};
`
const Search = styled.div`
    width: 288px;
    padding-left: 10px;
    display: flex;
    align-items: center;
    gap: 9px;
    background: #f1f1f1;
    border: 1px solid #c4c4c4;
    font-size: 15px;
    letter-spacing: -0.5px;
    color: #333;
`
const Tray = styled.div`
    margin-left: auto;
    margin-right: 13px;
    display: flex;
`
const Clock = styled.div`
    width: 64px;
    display: flex;
    flex-direction: column;
    align-items: center;
    justify-content: center;
    font-size: 12px;
    line-height: 18px;
    letter-spacing: -0.45px;
`

export default App
